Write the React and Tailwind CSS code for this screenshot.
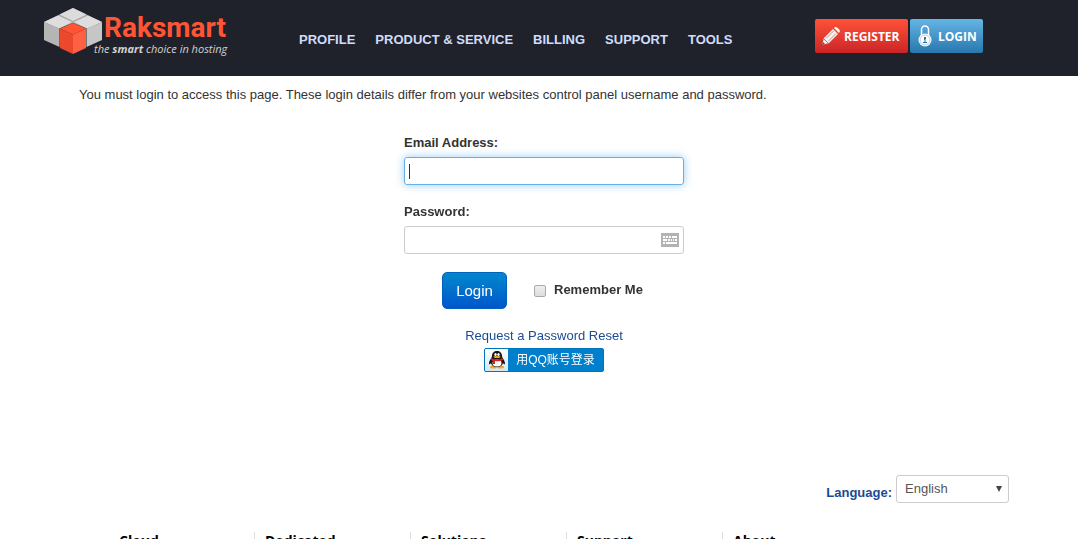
import React, { useState } from 'react';

const navLinks = ['PROFILE', 'PRODUCT & SERVICE', 'BILLING', 'SUPPORT', 'TOOLS'];
const footerColumns = ['Cloud', 'Dedicated', 'Solutions', 'Support', 'About'];

const CubeLogo = () => (
    <svg width="58" height="46" viewBox="0 0 58 46" aria-hidden="true">
        <path d="M29 0 58 14 43 20.500 29 15 15 20.500 0 14z" fill="#a9a9a9" />
        <path d="M29 0 42.500 6.500 29 13 15.500 6.500z" fill="#dcdcdc" />
        <path d="M14 7.500 28 14 15 20.500 0 14z" fill="#dedede" />
        <path d="M44 7.500 58 14 43 20.500 30 14z" fill="#dedede" />
        <path d="M0 14 15.500 20.500V39L0 32z" fill="#b5b5b5" />
        <path d="M58 14 42.500 20.500V39L58 32z" fill="#c6c6c6" />
        <path d="M29 15 42 20.500 29 26.500 16 20.500z" fill="#ff5535" />
        <path d="M16 20.500 29 26.500V46L16 40z" fill="#ec482e" />
        <path d="M29 26.500 42 20.500V40L29 46z" fill="#ff6044" />
    </svg>
);

const PencilIcon = () => (
    <svg width="18" height="18" viewBox="0 0 18 18" aria-hidden="true">
        <path d="M0 18 2 11 11 2 16 7 7 16z" fill="#f6f0ef" />
        <path d="M12 1 13 0Q16 0 18 4L17 6z" fill="#fff" />
        <path d="M4 11.500 11.500 4M6.500 14 14 6.500" stroke="#d88a84" strokeWidth="1" />
        <path d="M2 12 6 16" stroke="#d0655f" strokeWidth="1" />
        <path d="M0 18 1 15 3 17z" fill="#8f2b28" />
    </svg>
);

const LockIcon = () => (
    <svg width="14" height="22" viewBox="0 0 14 22" aria-hidden="true">
        <path d="M3.500 11V4.500a3.500 3.500 0 0 1 7 0V11" fill="none" stroke="#fff" strokeWidth="1.500" />
        <circle cx="7" cy="15" r="6.500" fill="#fff" />
        <circle cx="7" cy="15" r="5" fill="none" stroke="#9cc3da" strokeWidth="0.800" />
        <path d="M6 12h2v2H7.500v3H9v1H5v-1h1.500v-2H6z" fill="#2b6f9c" />
    </svg>
);

const KeyboardIcon = () => (
    <svg width="18" height="14" viewBox="0 0 18 14" aria-hidden="true">
        <path d="M0 0h18v14H0z" fill="#b3b3b3" />
        <path d="M2 3h2v2H2zM5 3h2v2H5zM8 3h2v2H8zM11 3h5v2h-5z" fill="#fff" />
        <path d="M2 6h4v2H2zM7 6h2v2H7zM10 6h1v2h-1zM12 6h1v2h-1zM14 6h2v2h-2z" fill="#fff" />
        <path d="M2 9h2v2H2zM5 9h11v2H5z" fill="#fff" />
    </svg>
);

const PenguinIcon = () => (
    <svg width="16" height="18" viewBox="0 0 16 18" aria-hidden="true">
        <ellipse cx="4.500" cy="16" rx="3.500" ry="1.500" fill="#f5a623" />
        <ellipse cx="11.500" cy="16" rx="3.500" ry="1.500" fill="#f5a623" />
        <path d="M8 0C5 0 3 2 3 5C3 7 0 9 0 13Q1 14 2 12Q3 16 8 16T14 12Q15 14 16 13C16 9 13 7 13 5C13 2 11 0 8 0z" fill="#151515" />
        <ellipse cx="8" cy="12" rx="4.500" ry="3.500" fill="#fff" />
        <ellipse cx="6.500" cy="3.500" rx="1.200" ry="1.500" fill="#fff" />
        <ellipse cx="9.500" cy="3.500" rx="1.200" ry="1.500" fill="#fff" />
        <ellipse cx="8" cy="6" rx="3.500" ry="1" fill="#f5a623" />
        <path d="M2 7Q8 10 14 7L14 9Q10 11 6 10L6 13H4V10L2 9z" fill="#e02020" />
    </svg>
);

const Header = () => (
    <header className="bg-[#20222b] h-[76px]">
        <div className="max-w-[990px] mx-auto flex items-start">
            <a href="#home" className="flex pt-2 w-[255px]">
                <CubeLogo />
                <span className="-ml-2 pt-1.5 flex flex-col">
                    <span className="pl-2.5 font-['Roboto'] font-bold text-[28px] leading-7 text-[#ff5535]">Raksmart</span>
                    <span className="font-['Open_Sans'] italic text-[11px] leading-3.5 text-[#d2d2d2] whitespace-nowrap">the <b>smart</b> choice in hosting</span>
                </span>
            </a>
            <nav className="flex gap-5 pt-[30px] text-[13px] leading-5 font-bold text-[#cfdcfa]">
                {navLinks.map((link) => (
                    <a key={link} href="#nav" className="whitespace-nowrap">{link}</a>
                ))}
            </nav>
            <div className="ml-auto mr-[51px] pt-[19px] flex gap-0.5 font-['Open_Sans'] font-bold text-[12px] text-white">
                <a href="#register" className="w-[93px] h-[34px] pl-[7px] flex items-center gap-1 rounded-xs bg-linear-to-b from-[#ff5137] to-[#cb2428]">
                    <PencilIcon />
                    <span className="pt-0.5">REGISTER</span>
                </a>
                <a href="#login" className="w-[73px] h-[34px] pl-2 flex items-center gap-1.5 rounded-xs bg-linear-to-b from-[#65b5e6] to-[#2678ae]">
                    <LockIcon />
                    <span className="pt-0.5">LOGIN</span>
                </a>
            </div>
        </div>
    </header>
);

const LoginForm = () => {
    const [email, setEmail] = useState('');
    const [password, setPassword] = useState('');

    return (
        <form onSubmit={(e) => e.preventDefault()} className="w-[280px] mx-auto mt-7 flex flex-col">
            <label htmlFor="email" className="font-bold mb-1">Email Address:</label>
            <div className="grid items-center">
                <input id="email" type="text" autoFocus value={email} onChange={(e) => setEmail(e.target.value)} className="col-start-1 row-start-1 h-7 px-1 border border-[#66afe9] rounded-[3px] outline-none shadow-[0_0_8px_rgba(82,168,236,0.6)]" />
                {!email && <span className="col-start-1 row-start-1 ml-[5px] w-px h-[15px] bg-[#333] pointer-events-none" />}
            </div>
            <label htmlFor="password" className="font-bold mt-[17px] mb-1">Password:</label>
            <div className="flex items-center h-7 px-1 border border-[#ccc] rounded-[3px]">
                <input id="password" type="password" value={password} onChange={(e) => setPassword(e.target.value)} className="flex-1 min-w-0 outline-none" />
                <KeyboardIcon />
            </div>
            <div className="mt-[18px] flex items-center pl-[38px]">
                <button type="submit" className="w-[65px] h-[37px] rounded-[5px] border border-[#0062bd] bg-linear-to-b from-[#0088cc] to-[#0055cc] text-white text-[15px]">Login</button>
                <input id="remember" type="checkbox" className="ml-[27px] w-3 h-3 appearance-none rounded-xs border border-[#aaa] bg-linear-to-b from-[#eee] to-[#ddd] checked:bg-[#0055cc]" />
                <label htmlFor="remember" className="ml-2 pb-0.5 font-bold">Remember Me</label>
            </div>
            <a href="#reset" className="mt-[17px] self-center text-[#1a4b93]">Request a Password Reset</a>
            <a href="#qq" className="mt-0.5 self-center flex w-[120px] h-6 rounded-xs overflow-hidden border border-[#0073bb] bg-[#007fcc] text-white text-xs">
                <span className="w-[23px] flex items-center justify-center bg-linear-to-b from-white to-[#cfe8f8]">
                    <PenguinIcon />
                </span>
                <span className="flex-1 text-center leading-[22px] font-['Liberation_Sans','Noto_Sans_CJK_SC',sans-serif]">用QQ账号登录</span>
            </a>
        </form>
    );
};

const App = () => {
    return (
        <div className="h-screen overflow-hidden bg-white font-['Liberation_Sans',Arial,sans-serif] text-[13px] leading-5 text-[#333]">
            <Header />
            <main className="max-w-[940px] mx-auto pl-2.5 pt-[9px]">
                <p>You must login to access this page. These login details differ from your websites control panel username and password.</p>
                <LoginForm />
                <div className="mt-[103px] flex justify-end items-center gap-1">
                    <label htmlFor="language" className="font-bold text-[#1a4b93] pt-2">Language:</label>
                    <div className="grid items-center">
                        <select id="language" className="col-start-1 row-start-1 appearance-none w-[113px] h-7 pl-2 border border-[#ccc] rounded-[3px] bg-white text-[#555]">
                            <option>English</option>
                        </select>
                        <svg width="6" height="6" viewBox="0 0 6 6" className="col-start-1 row-start-1 justify-self-end mr-[7px] pointer-events-none" aria-hidden="true">
                            <path d="M0 0h6L3 6z" fill="#444" />
                        </svg>
                    </div>
                </div>
            </main>
            <footer className="max-w-[860px] mx-auto mt-[29px] flex">
                {footerColumns.map((title) => (
                    <div key={title} className="w-[156px] h-40 pl-2.5 border-l border-[#ddd] first:w-[145px] first:border-l-0">
                        <h3 className="font-['Open_Sans'] font-bold text-sm leading-[18px] text-black">{title}</h3>
                    </div>
                ))}
            </footer>
        </div>
    );
};

export default App;
